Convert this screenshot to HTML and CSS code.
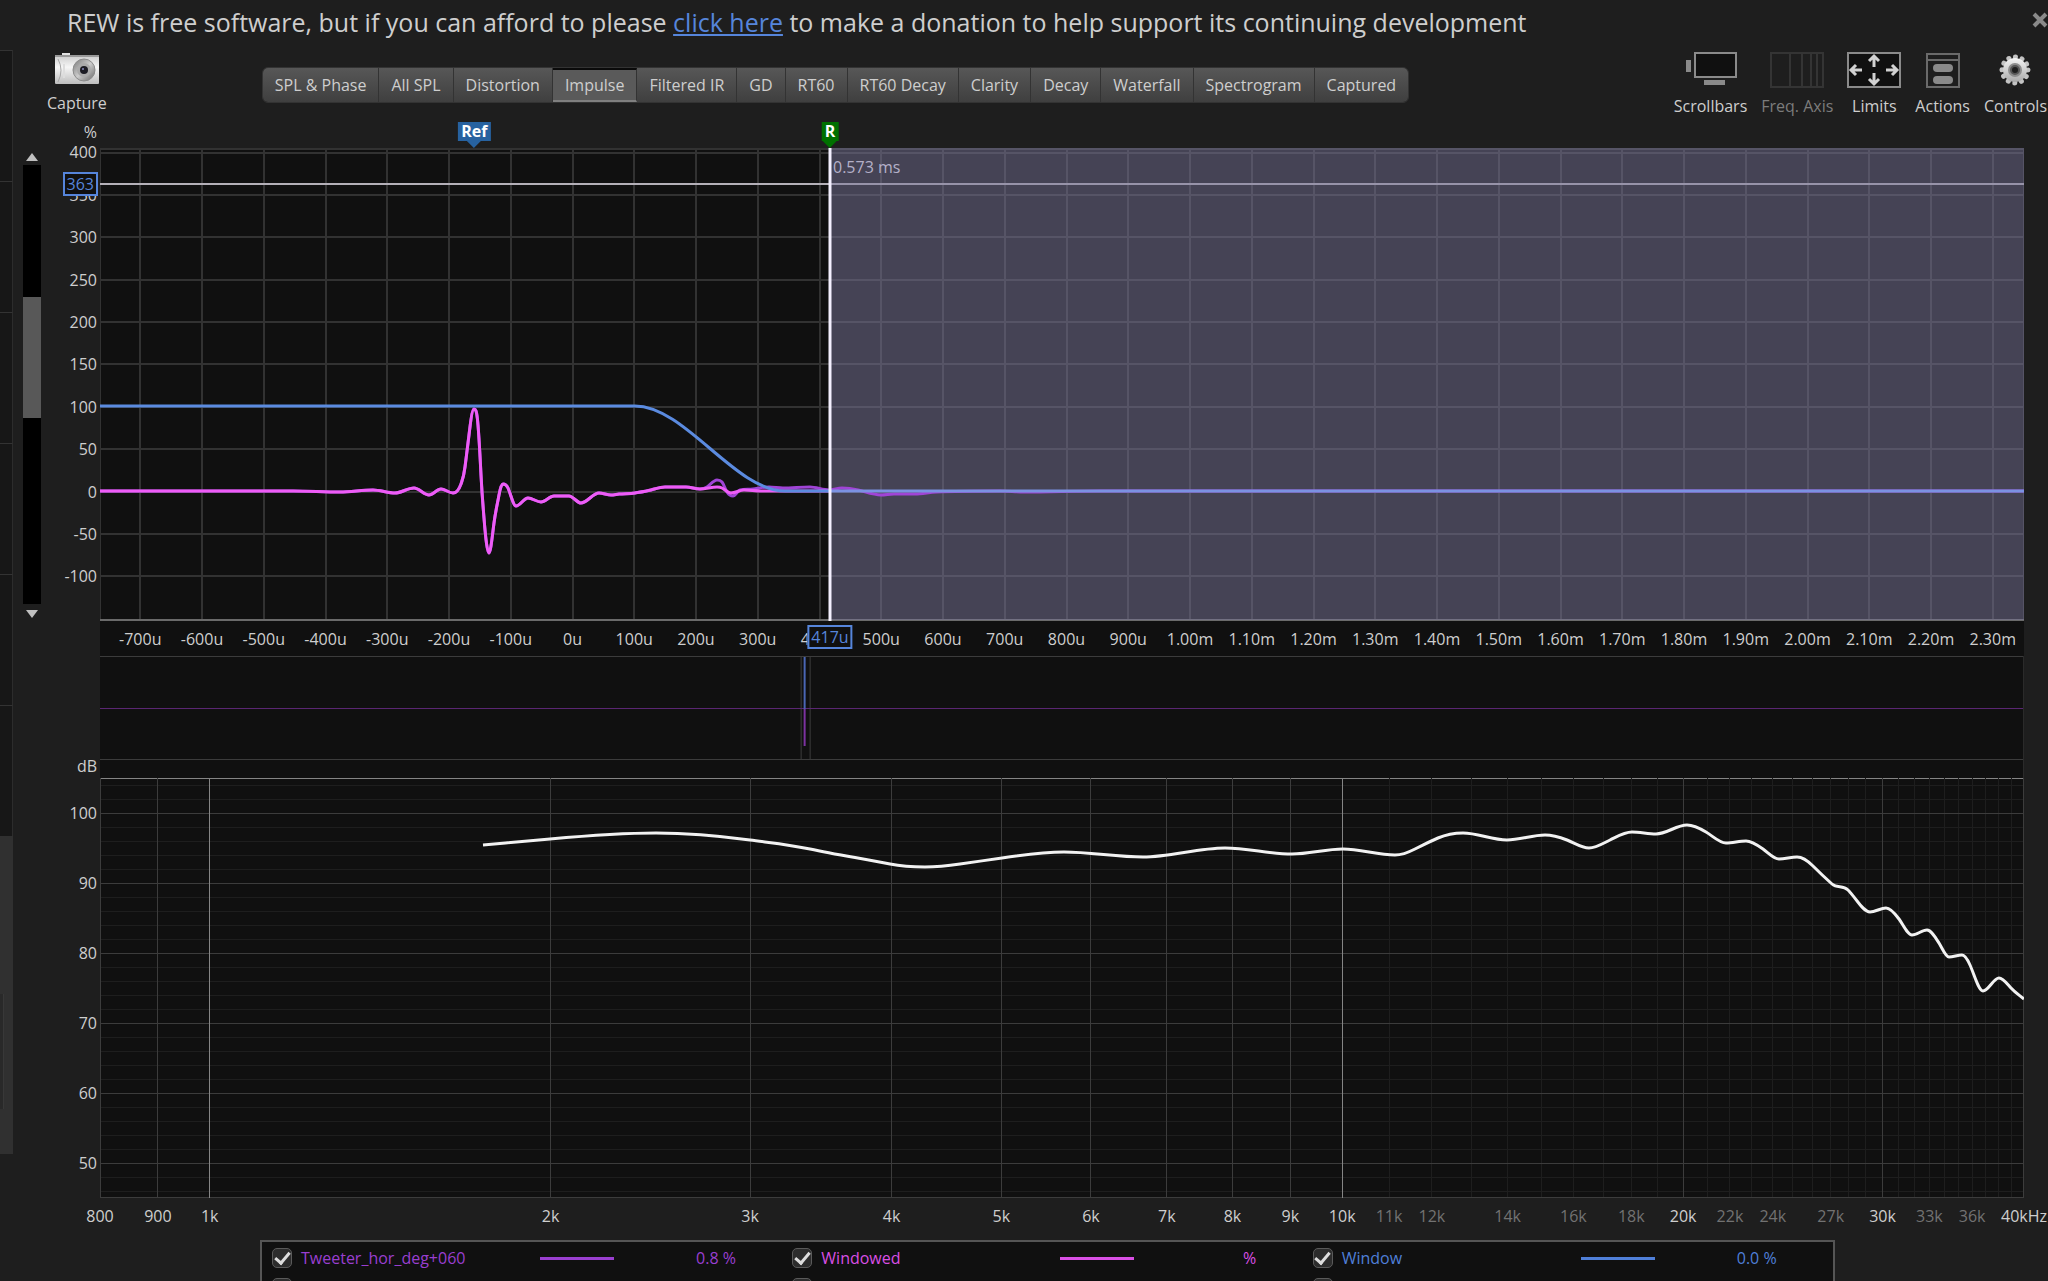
FILE: index.html
```html
<!DOCTYPE html>
<html lang="en">
<head>
    <meta charset="UTF-8">
    <meta name="viewport" content="width=device-width, initial-scale=1.0">
    <title>REW - Impulse</title>
    <link rel="stylesheet" href="styles.css">
</head>
<body>
    <aside class="sidebar">
        <div class="slot"></div>
        <div class="slot"></div>
        <div class="slot"></div>
        <div class="slot"></div>
        <div class="slot"></div>
        <div class="slot"></div>
        <div class="slot selected"><div class="notes"></div></div>
    </aside>

    <main>
        <div class="banner">
            <p>REW is free software, but if you can afford to please <a href="#donate">click here</a> to make a donation to help support its continuing development</p>
            <button class="close" aria-label="Close">
                <svg width="17" height="18" viewBox="0 0 17 18"><path d="M3 3L15 15M15 3L3 15" stroke="#8a8a8a" stroke-width="4"/></svg>
            </button>
        </div>

        <div class="toolbar">
            <button class="tool capture">
                <svg width="44" height="36" viewBox="0 0 44 36">
                    <defs>
                        <linearGradient id="body" x1="0" y1="0" x2="0" y2="1"><stop offset="0" stop-color="#cfcfcf"/><stop offset="0.4" stop-color="#f6f6f6"/><stop offset="1" stop-color="#bdbdbd"/></linearGradient>
                        <linearGradient id="lens" x1="0" y1="0" x2="1" y2="1"><stop offset="0" stop-color="#777"/><stop offset="0.5" stop-color="#ccc"/><stop offset="1" stop-color="#666"/></linearGradient>
                    </defs>
                    <rect x="7" y="1" width="8" height="5" fill="#e2e2e2"/>
                    <rect x="0" y="4" width="44" height="28" rx="1" fill="url(#body)"/>
                    <path d="M0 4H44" stroke="#999" stroke-width="2"/>
                    <path d="M3 7Q9 18 3 30" fill="none" stroke="#a8a8a8"/>
                    <path d="M9 12V26" stroke="#ddd" stroke-width="2"/>
                    <circle cx="29" cy="18" r="11" fill="url(#lens)" stroke="#8b8b8b"/>
                    <circle cx="29" cy="18" r="7" fill="#aaa"/>
                    <circle cx="29" cy="18" r="4" fill="#1c1c24"/>
                    <circle cx="28" cy="17" r="1" fill="#88b"/>
                </svg>
                <span>Capture</span>
            </button>

            <nav class="tabs">
                <button>SPL &amp; Phase</button>
                <button>All SPL</button>
                <button>Distortion</button>
                <button class="active">Impulse</button>
                <button>Filtered IR</button>
                <button>GD</button>
                <button>RT60</button>
                <button>RT60 Decay</button>
                <button>Clarity</button>
                <button>Decay</button>
                <button>Waterfall</button>
                <button>Spectrogram</button>
                <button>Captured</button>
            </nav>

            <div class="tools">
                <button class="tool">
                    <svg width="54" height="36" viewBox="0 0 54 36">
                        <rect x="11" y="1" width="41" height="24" fill="#101010" stroke="#8a8a8a" stroke-width="2"/>
                        <rect x="2" y="8" width="5" height="12" fill="#8a8a8a"/>
                        <rect x="20" y="28" width="21" height="5" fill="#8a8a8a"/>
                    </svg>
                    <span>Scrollbars</span>
                </button>
                <button class="tool" disabled>
                    <svg width="54" height="36" viewBox="0 0 54 36">
                        <path d="M1 1H53V35H1ZM20 1V35M32 1V35M41 1V35M47 1V35" fill="none" stroke="#343434" stroke-width="2"/>
                    </svg>
                    <span>Freq. Axis</span>
                </button>
                <button class="tool">
                    <svg width="54" height="36" viewBox="0 0 54 36">
                        <rect x="1" y="1" width="52" height="34" fill="#101010" stroke="#8a8a8a" stroke-width="2"/>
                        <path d="M27 15V5M22 9L27 4L32 9M27 21V31M22 27L27 32L32 27M15 18H5M9 13L4 18L9 23M39 18H49M45 13L50 18L45 23" fill="none" stroke="#d2d2d2" stroke-width="3"/>
                    </svg>
                    <span>Limits</span>
                </button>
                <button class="tool">
                    <svg width="34" height="36" viewBox="0 0 34 36">
                        <path d="M1 2H33V35H1ZM1 8H33" fill="none" stroke="#6a6a6a" stroke-width="2"/>
                        <rect x="7" y="12" width="20" height="8" rx="4" fill="#8a8a8a"/>
                        <rect x="7" y="24" width="20" height="8" rx="4" fill="#8a8a8a"/>
                    </svg>
                    <span>Actions</span>
                </button>
                <button class="tool">
                    <svg width="34" height="36" viewBox="0 0 34 36">
                        <defs><linearGradient id="gear" x1="0" y1="0" x2="0" y2="1"><stop offset="0" stop-color="#f4f4f4"/><stop offset="1" stop-color="#aaa"/></linearGradient></defs>
                        <circle cx="17" cy="18" r="13" fill="none" stroke="#c4c4c4" stroke-width="5" stroke-linecap="round" stroke-dasharray="0.1 6.71"/>
                        <circle cx="17" cy="18" r="12" fill="url(#gear)"/>
                        <circle cx="17" cy="18" r="7" fill="#8c8c8c"/>
                        <circle cx="17" cy="18" r="4" fill="#1e1e1e" stroke="#555" stroke-width="2"/>
                    </svg>
                    <span>Controls</span>
                </button>
            </div>
        </div>

        <section class="charts">
            <div class="scrollbar">
                <button class="up" aria-label="Scroll up"></button>
                <div class="track">
                    <div class="thumb"></div>
                </div>
                <button class="down" aria-label="Scroll down"></button>
            </div>

            <div class="y-axis" id="impulse-y">
                <span class="unit percent">%</span>
            </div>
            <div class="plot impulse">
                <svg id="impulse" viewBox="100 148 1924 473" preserveAspectRatio="none"></svg>
                <div class="marker ref" id="marker-ref">Ref</div>
                <div class="marker right" id="marker-right">R</div>
                <div class="delta" id="delta">0.573 ms</div>
            </div>

            <div class="x-axis time" id="impulse-x"></div>

            <div class="plot overview">
                <svg viewBox="100 656 1924 104" preserveAspectRatio="none">
                    <path class="frame" d="M100 656.5H2024M100 759.5H2024M801.5 656V760M810.5 656V760"/>
                    <path class="overview-line" d="M100 708.5H2024"/>
                    <path class="overview-window" d="M805 657V709"/>
                    <path class="overview-pulse" d="M805 709V746"/>
                </svg>
            </div>

            <div class="y-axis response-y" id="response-y">
                <span class="unit">dB</span>
            </div>
            <div class="plot response">
                <svg id="response" viewBox="100 778 1924 420" preserveAspectRatio="none"></svg>
            </div>

            <div class="x-axis freq" id="response-x"></div>
        </section>

        <section class="legend">
            <label class="trace measured"><input type="checkbox" checked><span class="name">Tweeter_hor_deg+060</span><i></i><span class="value">0.8 %</span></label>
            <label class="trace windowed"><input type="checkbox" checked><span class="name">Windowed</span><i></i><span class="value">%</span></label>
            <label class="trace window"><input type="checkbox" checked><span class="name">Window</span><i></i><span class="value">0.0 %</span></label>
            <label class="trace"><input type="checkbox" aria-label="Trace 4"></label>
            <label class="trace"><input type="checkbox" aria-label="Trace 5"></label>
            <label class="trace"><input type="checkbox" aria-label="Trace 6"></label>
        </section>
    </main>

    <script src="charts.js"></script>
</body>
</html>
```
FILE: styles.css
```css
* {
    box-sizing: border-box;
}
body {
    display: flex;
    height: 100vh;
    margin: 0;
    overflow: hidden;
    background-color: #1e1e1e;
    color: #cecece;
    font-family: "Open Sans", "Noto Sans", sans-serif;
    font-size: 16px;
    line-height: 24px;
}
button {
    padding: 0;
    border: none;
    background: none;
    color: inherit;
    font: inherit;
    white-space: nowrap;
}
svg {
    display: block;
}

/* measurement list at the left edge */
.sidebar {
    flex: none;
    width: 13px;
    padding-top: 50px;
}
.slot {
    height: 131px;
    border-top: 1px solid #333;
    border-right: 1px solid #2c2c2c;
    background-color: #171717;
}
.slot.selected {
    height: 318px;
    padding-top: 157px;
    border-color: #303030;
    background-color: #303030;
}
.notes {
    width: 4px;
    height: 115px;
    background-color: #292929;
    border-right: 1px solid #383838;
}

main {
    flex: 1;
    min-width: 0;
}

/* donation banner */
.banner {
    display: flex;
    justify-content: space-between;
    height: 50px;
    padding: 6px 0 0 54px;
    font-size: 25px;
    line-height: 32px;
}
.banner p {
    margin: 0;
    white-space: nowrap;
}
.banner a {
    color: #5685db;
}
.close {
    flex: none;
    height: 28px;
}

/* toolbar */
.toolbar {
    display: flex;
    align-items: flex-start;
    height: 98px;
    padding: 0 1px 0 34px;
}
.tool {
    display: flex;
    flex-direction: column;
    align-items: center;
    gap: 6px;
    padding-top: 2px;
}
.tool.capture {
    gap: 3px;
}
.tool:disabled {
    color: #7c7c7c;
}
.tabs {
    display: flex;
    margin: 17px auto 0 155px;
    border: 1px solid #333;
    border-radius: 6px;
    overflow: hidden;
}
.tabs button {
    height: 34px;
    padding: 0 12px;
    border-right: 1px solid #333;
    background: linear-gradient(#575757, #3f3f3f);
}
.tabs button:last-child {
    border-right: none;
}
.tabs .active {
    border-top: 2px solid #0a0a0a;
    border-bottom: 2px solid #808080;
    background: #5a5a5a;
}
.tools {
    display: flex;
    gap: 14px;
}

/* plots */
.charts {
    display: grid;
    grid-template-columns: 28px 59px 1fr 24px;
    grid-template-rows: 473px 35px 104px 18px 420px 42px;
}
.plot {
    grid-column: 3;
    position: relative;
}
.plot svg {
    width: 100%;
    height: 100%;
}
.impulse,
.time,
.overview,
.response {
    background-color: #101010;
}
.impulse {
    grid-row: 1;
}
.time {
    grid-row: 2;
}
.overview {
    grid-row: 3 / 5;
    padding-bottom: 18px;
    border-right: 1px solid #2a2a2a;
}
.response {
    grid-row: 5;
}
.freq {
    grid-row: 6;
}
.y-axis {
    grid-column: 2;
    grid-row: 1;
    position: relative;
}
.response-y {
    grid-row: 5;
}
.x-axis {
    grid-column: 3;
    position: relative;
}
.y-axis .unit {
    position: absolute;
    right: 3px;
    bottom: 100%;
}
.y-axis .percent {
    padding-bottom: 4px;
}
.y-axis .tick {
    position: absolute;
    right: 3px;
    transform: translateY(-50%);
}
.x-axis .tick {
    position: absolute;
    top: 6px;
    transform: translateX(-50%);
    white-space: nowrap;
}
.tick.minor {
    color: #727272;
}
.tick.readout {
    padding: 0 2px;
    border: 2px solid #5685db;
    background-color: #101010;
    color: #5685db;
    line-height: 20px;
}
.y-axis .tick.readout {
    right: 2px;
}
.x-axis .tick.readout {
    top: 4px;
}

.scrollbar {
    grid-column: 1;
    grid-row: 1;
    display: flex;
    flex-direction: column;
    align-items: center;
    width: 18px;
    margin-left: 10px;
    padding-top: 5px;
}
.track {
    width: 18px;
    height: 439px;
    margin: 4px 0 6px;
    padding-top: 132px;
    background-color: #000;
}
.thumb {
    height: 121px;
    background-color: #585858;
}
.up,
.down {
    border: 6px solid transparent;
}
.up {
    border-top: none;
    border-bottom: 8px solid #c0c0c0;
}
.down {
    border-bottom: none;
    border-top: 8px solid #c0c0c0;
}

.marker {
    position: absolute;
    bottom: 100%;
    margin-bottom: 7px;
    padding: 0 3px;
    transform: translateX(-50%);
    color: #fff;
    font-weight: bold;
    line-height: 19px;
}
.marker::after {
    content: "";
    position: absolute;
    top: 100%;
    left: 50%;
    margin-left: -7px;
    border: 7px solid transparent;
    border-bottom: none;
}
.ref {
    background-color: #2762a0;
}
.ref::after {
    border-top-color: #2762a0;
}
.right {
    background-color: #007000;
}
.right::after {
    border-top-color: #007000;
}
.delta {
    position: absolute;
    top: 7px;
    margin-left: 3px;
    color: #b4b0c8;
}

.plot path {
    fill: none;
    vector-effect: non-scaling-stroke;
}
.frame,
.grid {
    stroke: #3c3c3c;
    shape-rendering: crispEdges;
}
.impulse .grid {
    stroke: #323232;
    stroke-width: 2px;
}
.grid-minor {
    stroke: #1e1e1e;
    shape-rendering: crispEdges;
}
.grid-decade {
    stroke: #858585;
}
.baseline {
    stroke: #6a6a6a;
    stroke-width: 2px;
}
.gate {
    fill: rgba(122, 118, 154, 0.5);
}
.cursor-x {
    stroke: #f4f0ff;
    stroke-width: 3px;
}
.cursor-y {
    stroke: #b4b0b8;
    stroke-width: 2px;
}
.curve {
    stroke-width: 3px;
    stroke-linejoin: round;
}
.curve-measured {
    stroke: #a044d6;
}
.curve-windowed {
    stroke: #ee5cf6;
}
.curve-window {
    stroke: #5b8be0;
}
.curve-gated {
    stroke: #7b92e2;
}
.curve-response {
    stroke: #f2f2f2;
}
.overview-line {
    stroke: #5a2672;
}
.overview-window {
    stroke: #4a66b4;
    stroke-width: 2px;
}
.overview-pulse {
    stroke: #7c32a0;
    stroke-width: 2px;
}

/* trace legend */
.legend {
    display: grid;
    grid-template-columns: repeat(3, 1fr);
    row-gap: 6px;
    margin: 0 213px 0 247px;
    padding: 4px 0 4px 10px;
    border: 2px solid #555;
    border-bottom: none;
    background-color: #101010;
}
.trace {
    display: grid;
    grid-template-columns: 20px 248px 74px 122px;
    align-items: center;
    height: 24px;
}
.trace .name {
    padding-left: 9px;
}
.trace .value {
    text-align: right;
}
.trace i {
    height: 3px;
    background-color: currentColor;
}
.trace input {
    display: grid;
    place-items: center;
    width: 20px;
    height: 20px;
    margin: 0;
    border: 1px solid #5a5a5a;
    border-radius: 5px;
    background-color: #2c2c2c;
    appearance: none;
}
.trace input:checked::before {
    content: "";
    width: 6px;
    height: 12px;
    margin-bottom: 3px;
    border: solid #ddd;
    border-width: 0 3px 3px 0;
    transform: rotate(40deg);
}
.measured {
    color: #9a3fd0;
}
.windowed {
    color: #d94fe4;
}
.window {
    color: #4f7fd8;
}
```
FILE: charts.js
```js
// plot area, shared by both charts
const LEFT = 100;
const RIGHT = 2024;

const timeX = us => 572.5 + us * 0.6175;
const percentY = v => 491.5 - v * 0.8475;
const freqX = f => LEFT + (RIGHT - LEFT) * Math.log(f / 800) / Math.log(50);
const dbY = v => 778 + (105 - v) * 7;

const CURSOR_US = 417;
const REF_US = -159;

// ringing around the pulse, up to where the window starts to act
const pulse = [
    [100, 491], [200, 491], [293, 491], [340, 492], [373, 490], [395, 493],
    [414, 488], [429, 495], [441, 489], [453, 493], [461, 484], [465, 467],
    [469, 435], [474, 409], [478, 425], [481, 475], [484, 518], [489, 553], [494, 523],
    [499, 495], [503, 484], [508, 488], [516, 506], [528, 498], [541, 502],
    [554, 496], [569, 496], [581, 503], [599, 493], [611, 495], [619, 494],
    [635, 493], [651, 490], [665, 487], [686, 487], [700, 489]
];
const windowed = pulse.concat([
    [717, 487], [722, 488], [731, 493], [744, 490], [761, 491], [783, 491], [829, 491]
]);
const measured = pulse.concat([
    [707, 487], [717, 480], [722, 482], [727, 492], [733, 496], [740, 490],
    [753, 489], [769, 487], [783, 488], [810, 487], [829, 490], [842, 488],
    [858, 490], [881, 495], [894, 494], [915, 494], [936, 492], [1000, 491], [1024, 492], [1100, 491], [2024, 491]
]);
const response = [
    [483, 845], [550, 839], [656, 833], [750, 840], [810, 849], [890, 864],
    [925, 867], [960, 864], [1002, 858], [1064, 852], [1143, 857], [1225, 848],
    [1292, 854], [1343, 849], [1395, 855], [1415, 849], [1438, 838],
    [1463, 833], [1507, 840], [1545, 835], [1567, 840], [1589, 848],
    [1610, 840], [1632, 832], [1656, 834], [1687, 825], [1706, 832],
    [1726, 843], [1746, 841], [1763, 849], [1779, 859], [1797, 857],
    [1813, 866], [1832, 884], [1848, 890], [1870, 912], [1886, 908],
    [1899, 919], [1912, 935], [1927, 930], [1939, 943], [1949, 957],
    [1962, 955], [1970, 965], [1983, 991], [1999, 978], [2011, 988], [2024, 999]
];

// smooth line through the points, flat at every local extreme
function smooth(points) {
    const slopes = points.map((p, i) => {
        const a = points[i - 1] || p;
        const b = points[i + 1] || p;
        const mean = (b[1] - a[1]) / (b[0] - a[0]);
        if (a === p || b === p) return mean;
        const s1 = (p[1] - a[1]) / (p[0] - a[0]);
        const s2 = (b[1] - p[1]) / (b[0] - p[0]);
        if (s1 * s2 <= 0) return 0;
        const limit = 3 * Math.min(Math.abs(s1), Math.abs(s2));
        return Math.sign(mean) * Math.min(Math.abs(mean) * 1.3, limit);
    });
    let d = "M" + points[0];
    for (let i = 1; i < points.length; i++) {
        const [x0, y0] = points[i - 1];
        const [x1, y1] = points[i];
        const h = (x1 - x0) / 3;
        d += `C${x0 + h} ${y0 + slopes[i - 1] * h} ${x1 - h} ${y1 - slopes[i] * h} ${x1} ${y1}`;
    }
    return d;
}

function path(cls, d) {
    return `<path class="${cls}" d="${d}"/>`;
}

const pixel = v => Math.floor(v) + 0.5;
const percentLeft = x => (x - LEFT) / (RIGHT - LEFT) * 100 + "%";

function addTick(axis, side, position, text, cls = "") {
    const tick = document.createElement("span");
    tick.className = "tick " + cls;
    tick.style[side] = position;
    tick.textContent = text;
    document.getElementById(axis).appendChild(tick);
}

function drawImpulse() {
    let grid = "M100 148V621M100 149H2024M2024 148V621";
    for (let v = 400; v >= -100; v -= 50) {
        grid += `M100 ${Math.round(percentY(v))}H2024`;
        addTick("impulse-y", "top", (percentY(v) - 148) / 473 * 100 + "%", v);
    }
    for (let us = -700; us <= 2300; us += 100) {
        grid += `M${Math.round(timeX(us))} 148V621`;
        const text = us < 1000 ? us + "u" : (us / 1000).toFixed(2) + "m";
        addTick("impulse-x", "left", percentLeft(timeX(us)), text);
    }
    addTick("impulse-y", "top", (percentY(363) - 148) / 473 * 100 + "%", "363", "readout");
    addTick("impulse-x", "left", percentLeft(timeX(CURSOR_US)), CURSOR_US + "u", "readout");

    const cursor = timeX(CURSOR_US);
    document.getElementById("impulse").innerHTML =
        path("grid", grid) +
        path("baseline", "M100 620H2024") +
        path("cursor-y", "M100 184H2024") +
        `<rect class="gate" x="${cursor}" y="148" width="${RIGHT - cursor}" height="472"/>` +
        path("curve curve-measured", smooth(measured)) +
        path("curve curve-windowed", smooth(windowed)) +
        path("curve curve-window", `M100 406H635C685 406 735 491 785 491H${cursor}`) +
        path("curve curve-gated", `M${cursor} 491H2024`) +
        path("cursor-x", `M${cursor} 148V621`);

    document.getElementById("marker-ref").style.left = percentLeft(timeX(REF_US));
    document.getElementById("marker-right").style.left = percentLeft(cursor);
    document.getElementById("delta").style.left = percentLeft(cursor);
}

function drawResponse() {
    let minor = "";
    let major = "M100.5 778V1198M100 1197.5H2024M2023.5 778V1198";
    for (let v = 104; v > 45; v -= 2) {
        const line = `M100 ${pixel(dbY(v))}H2024`;
        if (v % 10 === 0) {
            major += line;
            addTick("response-y", "top", (dbY(v) - 778) / 420 * 100 + "%", v);
        } else {
            minor += line;
        }
    }
    for (let f = 11000; f < 40000; f += 1000) {
        if (f % 10000 !== 0) minor += `M${pixel(freqX(f))} 778V1198`;
    }
    [900, 2000, 3000, 4000, 5000, 6000, 7000, 8000, 9000, 20000, 30000].forEach(f => {
        major += `M${pixel(freqX(f))} 778V1198`;
    });
    [800, 900, 1, 2, 3, 4, 5, 6, 7, 8, 9, 10, 20, 30].forEach(f => {
        const hz = f < 100 ? f * 1000 : f;
        addTick("response-x", "left", percentLeft(freqX(hz)), f < 100 ? f + "k" : f);
    });
    [11, 12, 14, 16, 18, 22, 24, 27, 33, 36].forEach(f => {
        addTick("response-x", "left", percentLeft(freqX(f * 1000)), f + "k", "minor");
    });
    addTick("response-x", "left", "100%", "40kHz");

    document.getElementById("response").innerHTML =
        path("grid-decade", "M100 778.5H2024") +
        path("grid-minor", minor) +
        path("grid", major) +
        path("grid-decade", `M${pixel(freqX(1000))} 778V1198M${pixel(freqX(10000))} 778V1198`) +
        path("curve curve-response", smooth(response));
}

drawImpulse();
drawResponse();
```
